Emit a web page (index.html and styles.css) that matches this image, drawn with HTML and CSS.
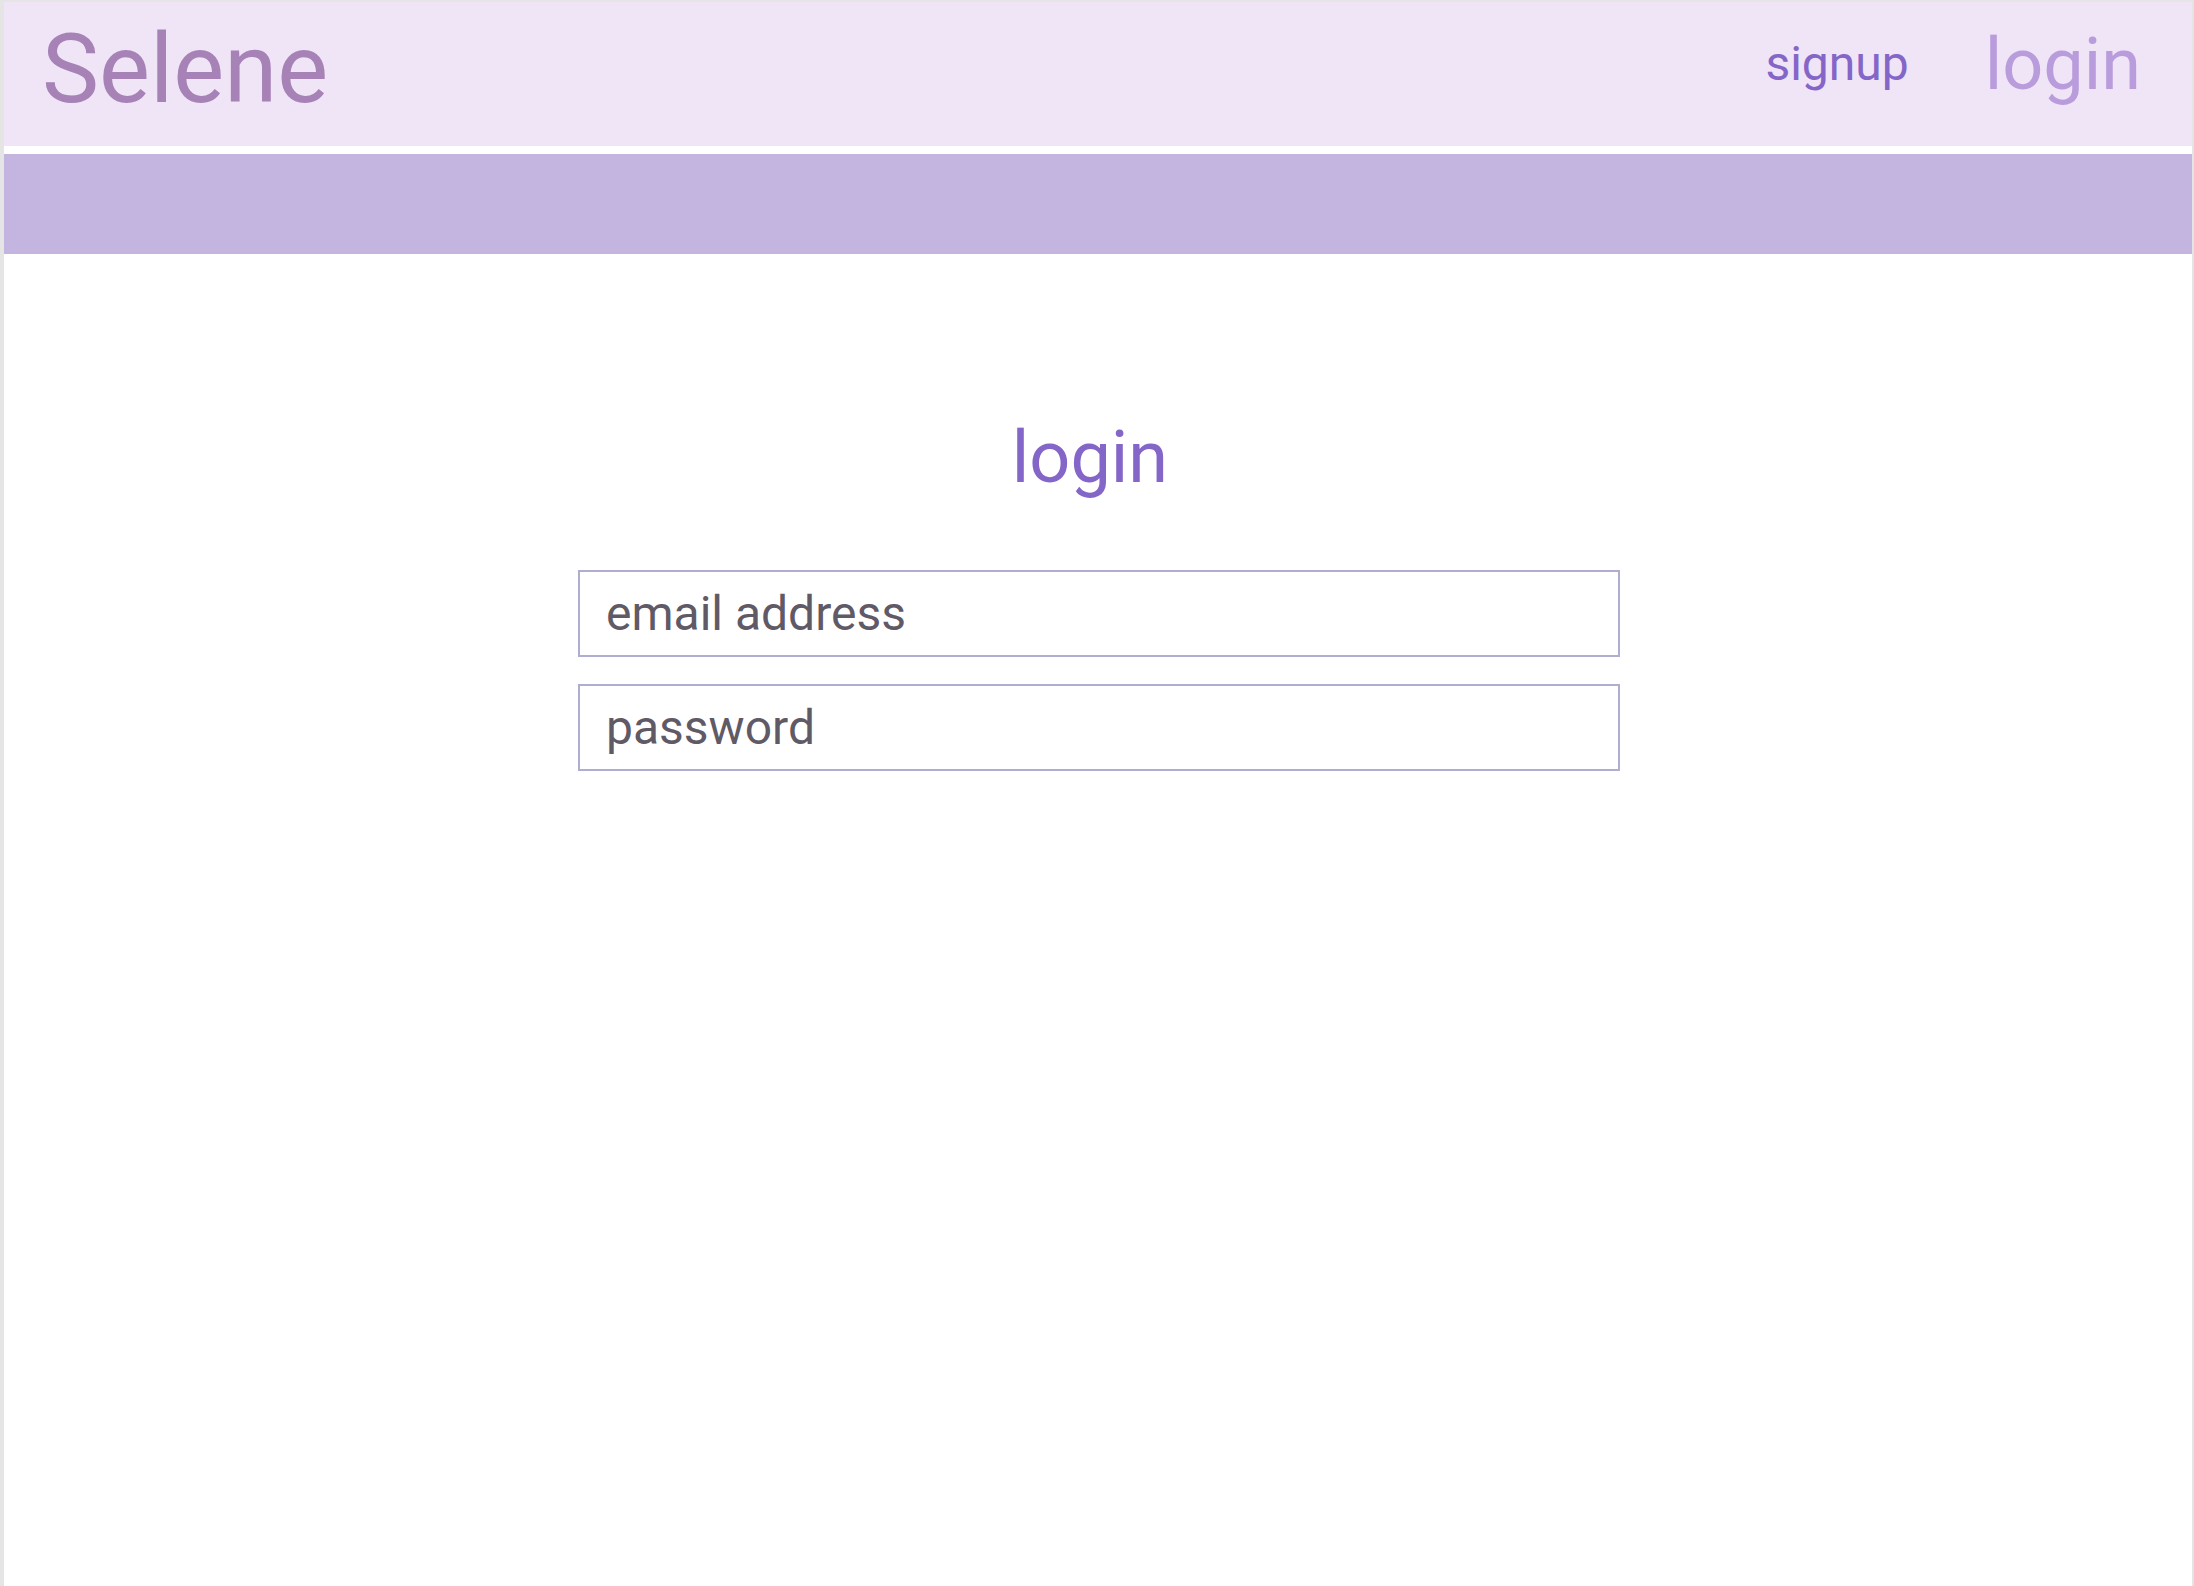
FILE: index.html
```html
<!DOCTYPE html>
<html>
<head>
<meta charset="utf-8">
<title>Selene</title>
<link rel="stylesheet" href="styles.css">
</head>
<body>
<div class="page">
  <header class="header">
    <div class="brand">Selene</div>
    <nav class="nav">
      <a class="nav-signup" href="#">signup</a>
      <a class="nav-login" href="#">login</a>
    </nav>
  </header>
  <div class="band"></div>
  <main class="main">
    <h1 class="title">login</h1>
    <form class="form">
      <input class="field" type="email" placeholder="email address">
      <input class="field" type="password" placeholder="password">
    </form>
  </main>
</div>
</body>
</html>
```
FILE: styles.css
```css
html, body {
  margin: 0;
  padding: 0;
  height: 100%;
}
body {
  background: #e5e5e5;
  font-family: Roboto, "Liberation Sans", sans-serif;
}
.page {
  margin: 2px 2px 0 4px;
  background: #ffffff;
  min-height: calc(100% - 2px);
  display: flex;
  flex-direction: column;
}
.header {
  height: 144px;
  background: #f0e4f7;
  display: flex;
  align-items: flex-start;
  justify-content: space-between;
  padding: 0 51px 0 38px;
  box-sizing: border-box;
}
.brand {
  font-size: 96px;
  line-height: 1;
  color: #a682b6;
  margin-top: 19px;
}
.nav {
  display: flex;
  align-items: flex-start;
  gap: 76px;
}
.nav a {
  text-decoration: none;
  line-height: 1;
}
.nav-signup {
  font-size: 48px;
  color: #8466c8;
  margin-top: 38px;
}
.nav-login {
  font-size: 72px;
  color: #b89cdc;
  margin-top: 27px;
}
.band {
  height: 100px;
  background: #c4b4e0;
  margin-top: 8px;
}
.main {
  display: flex;
  flex-direction: column;
  align-items: center;
  padding-left: 2px;
}
.title {
  margin: 168px 0 0 0;
  padding-right: 18px;
  font-size: 72px;
  line-height: 1;
  font-weight: 400;
  color: #8366c8;
}
.form {
  margin-top: 76px;
  display: flex;
  flex-direction: column;
  gap: 27px;
}
.field {
  width: 1042px;
  height: 87px;
  box-sizing: border-box;
  border: 2px solid #afaed0;
  border-radius: 0;
  padding: 0 24px 0 26px;
  font-family: Roboto, "Liberation Sans", sans-serif;
  font-size: 48px;
  color: #5f5a66;
  background: #ffffff;
  outline: none;
}
.field::placeholder {
  color: #5f5a66;
  opacity: 1;
}
```
